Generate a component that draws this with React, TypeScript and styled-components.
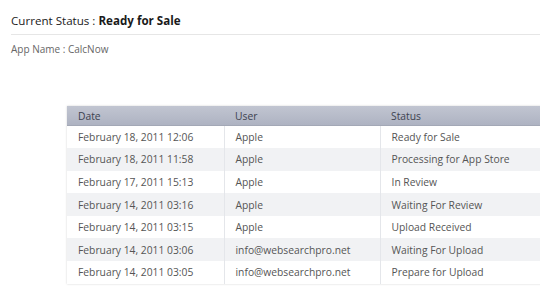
import React from 'react'
import styled, { createGlobalStyle } from 'styled-components'

const GlobalStyle = createGlobalStyle`
  html, body {
    margin: 0;
    padding: 0;
    background: #ffffff;
    overflow: hidden;
  }
  body {
    font-family: 'Open Sans', 'DejaVu Sans', sans-serif;
    width: 540px;
    height: 298px;
  }
`

const rows = [
  { date: 'February 18, 2011 12:06', user: 'Apple', status: 'Ready for Sale' },
  { date: 'February 18, 2011 11:58', user: 'Apple', status: 'Processing for App Store' },
  { date: 'February 17, 2011 15:13', user: 'Apple', status: 'In Review' },
  { date: 'February 14, 2011 03:16', user: 'Apple', status: 'Waiting For Review' },
  { date: 'February 14, 2011 03:15', user: 'Apple', status: 'Upload Received' },
  { date: 'February 14, 2011 03:06', user: 'info@websearchpro.net', status: 'Waiting For Upload' },
  { date: 'February 14, 2011 03:05', user: 'info@websearchpro.net', status: 'Prepare for Upload' }
]

export default function App (): JSX.Element {
  return (
    <Page>
      <GlobalStyle />
      <Header>
        <Title>
          Current Status : <strong>Ready for Sale</strong>
        </Title>
      </Header>
      <AppName>App Name : CalcNow</AppName>
      <TableWrap>
        <HistoryTable>
          <thead>
            <tr>
              <HeadCell width={146}>Date</HeadCell>
              <HeadCell width={145}>User</HeadCell>
              <HeadCell>Status</HeadCell>
            </tr>
          </thead>
          <tbody>
            {rows.map((r, i) => (
              <Row key={i} striped={i % 2 === 1}>
                <Cell>{r.date}</Cell>
                <Cell>{r.user}</Cell>
                <Cell>{r.status}</Cell>
              </Row>
            ))}
          </tbody>
        </HistoryTable>
      </TableWrap>
    </Page>
  )
}

const Page = styled.div`
  width: 540px;
  height: 298px;
  overflow: hidden;
  padding-top: 12px;
  box-sizing: border-box;
`

const Header = styled.div`
  margin-left: 11px;
  border-bottom: 1px solid #e6e6e6;
  padding-bottom: 4px;
`

const Title = styled.h1`
  margin: 0;
  font-size: 11.6px;
  line-height: 18px;
  font-weight: normal;
  color: #1a1a1a;

  strong {
    font-weight: bold;
  }
`

const AppName = styled.div`
  margin: 6px 0 0 11px;
  font-size: 10px;
  line-height: 16px;
  color: #666666;
`

const TableWrap = styled.div`
  margin: 49px 0 0 67px;
  width: 520px;
  box-shadow: 0 0 2px rgba(0, 0, 0, 0.18);
`

const HistoryTable = styled.table`
  width: 100%;
  border-collapse: collapse;
  table-layout: fixed;
`

const HeadCell = styled.th<{ width?: number }>`
  width: ${(props) => (props.width ? `${props.width}px` : 'auto')};
  height: 19px;
  padding: 0 0 0 11px;
  text-align: left;
  font-size: 10.3px;
  font-weight: normal;
  color: #3d4250;
  background: linear-gradient(#c1c5d1, #aeb3c2);
  border-bottom: 1px solid #a3a8b6;
`

const Row = styled.tr<{ striped: boolean }>`
  height: 22.6px;
  background: ${(props) => (props.striped ? '#f1f2f4' : '#ffffff')};
`

const Cell = styled.td`
  padding: 0 0 0 11px;
  font-size: 10.3px;
  color: #555555;
  white-space: nowrap;
  border-left: 1px solid #e4e6ea;

  &:first-child {
    border-left: none;
  }
`
